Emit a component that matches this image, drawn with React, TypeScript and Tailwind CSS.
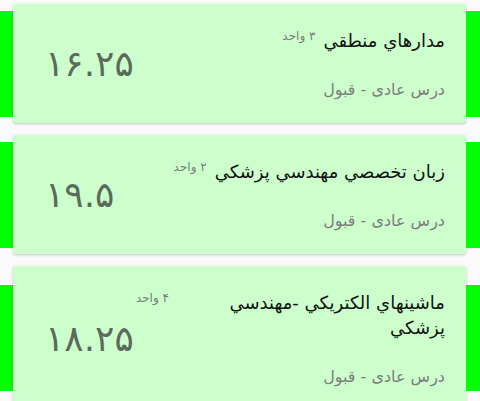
import React from 'react';

interface Course {
  title: string;
  units: string;
  status: string;
  grade: string;
}

const courses: Course[] = [
  { title: 'مدارهاي منطقي', units: '۳ واحد', status: 'درس عادی - قبول', grade: '۱۶.۲۵' },
  { title: 'زبان تخصصي مهندسي پزشكي', units: '۲ واحد', status: 'درس عادی - قبول', grade: '۱۹.۵' },
  { title: 'ماشينهاي الكتريكي -مهندسي پزشكي', units: '۴ واحد', status: 'درس عادی - قبول', grade: '۱۸.۲۵' },
];

const CourseCard: React.FC<{ course: Course }> = ({ course }) => {
  return (
    <div className="flex items-center">
      <div className="w-[13px] h-[106px] bg-[#00ff00] shrink-0" />
      <div className="flex-1 flex items-center justify-between bg-[#ccffcc] rounded-[3px] shadow-[0_1px_3px_rgba(0,0,0,0.22)] pl-[32px] pr-[21px] pt-[24px] pb-[21px]">
        <div dir="ltr" className="text-[36px] leading-none text-[#5b6b5b] pb-[2px]">
          {course.grade}
        </div>
        <div className="flex flex-col items-end">
          <div className="flex items-start gap-[8px]">
            <span dir="rtl" className="text-[12px] leading-[14px] text-[#7a7a7a] mt-[1px]">
              {course.units}
            </span>
            <div dir="rtl" className="text-[18px] leading-[25px] text-[#111] text-right max-w-[268px]">
              {course.title}
            </div>
          </div>
          <div dir="rtl" className="text-[16px] leading-[24px] text-[#7d7d7d] mt-[25px]">
            {course.status}
          </div>
        </div>
      </div>
      <div className="w-[14px] h-[106px] bg-[#00ff00] shrink-0" />
    </div>
  );
};

export default function App() {
  return (
    <div className="w-[480px] h-[401px] overflow-hidden bg-[#fafafa] pt-[4px] flex flex-col gap-[12px] font-['DejaVu_Sans',sans-serif]">
      {courses.map((c) => (
        <CourseCard key={c.title} course={c} />
      ))}
    </div>
  );
}
